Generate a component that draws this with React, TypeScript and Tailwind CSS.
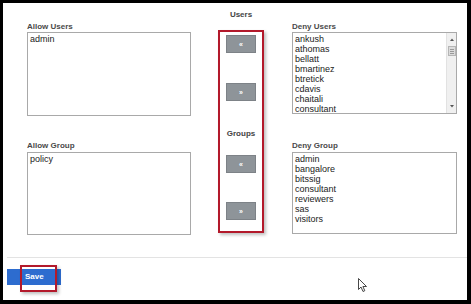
import React from "react";

const font = { fontFamily: '"Liberation Sans", Arial, sans-serif' };

function ArrowBtn({ dir }: { dir: "l" | "r" }) {
  return (
    <div className="w-[30px] h-[18px] bg-[#8e9499] border border-[#7d8287] flex items-center justify-center text-white text-[7px] leading-none font-bold">
      {dir === "l" ? "«" : "»"}
    </div>
  );
}

function ListBox({ items, h, scroll }: { items: string[]; h: string; scroll?: boolean }) {
  return (
    <div className={`relative w-[165px] ${h} border border-[#a9a9a9] bg-white flex`}>
      <div className="flex-1 pl-[2px] pt-[1px] text-[9px] leading-[10px] text-[#222]">
        {items.map((t) => (
          <div key={t}>{t}</div>
        ))}
      </div>
      {scroll && (
        <div className="w-[10px] h-full bg-[#f0f0f0] border-l border-[#e2e2e2] flex flex-col items-center">
          <svg width="10" height="10" viewBox="0 0 10 10" className="mt-[2px]">
            <path d="M3 6 L5 3.5 L7 6 Z" fill="#555" />
          </svg>
          <div className="w-[8px] h-[10px] mt-[1px] bg-[#dcdcdc] border border-[#b5b5b5] flex flex-col items-center justify-center gap-[1px]">
            <div className="w-[4px] h-px bg-[#999]" />
            <div className="w-[4px] h-px bg-[#999]" />
            <div className="w-[4px] h-px bg-[#999]" />
          </div>
          <div className="flex-1" />
          <svg width="10" height="10" viewBox="0 0 10 10" className="mb-[2px]">
            <path d="M3 4 L5 6.5 L7 4 Z" fill="#555" />
          </svg>
        </div>
      )}
    </div>
  );
}

export default function App() {
  return (
    <div className="w-[471px] h-[304px] bg-black pt-[3px] pl-[3px] pr-[4px] pb-[4px]" style={font}>
      <div className="relative w-full h-full bg-white overflow-hidden">
        <div className="flex items-start pl-[24px] pt-[7px]">
          {/* left column */}
          <div className="mt-[12px] w-[164px] flex flex-col">
            <div className="text-[8px] leading-[10px] font-bold text-[#4a4a4a]">Allow Users</div>
            <div className="w-[164px] h-[84px] border border-[#a9a9a9] pl-[2px] pt-[1px] text-[9px] leading-[10px] text-[#222]">
              admin
            </div>
            <div className="mt-[25px] text-[8px] leading-[10px] font-bold text-[#4a4a4a]">Allow Group</div>
            <div className="mt-[1px] w-[164px] h-[83px] border border-[#a9a9a9] pl-[2px] pt-[1px] text-[9px] leading-[10px] text-[#222]">
              policy
            </div>
          </div>

          {/* middle column */}
          <div className="ml-[27px] w-[46px] flex flex-col items-center">
            <div className="text-[8px] leading-[10px] font-bold text-[#444]">Users</div>
            <div className="mt-[10px] w-[46px] h-[203px] border-2 border-[#b3192b] shadow-[2px_2px_3px_rgba(0,0,0,0.25)] flex flex-col items-center pt-[3px]">
              <ArrowBtn dir="l" />
              <div className="mt-[30px]">
                <ArrowBtn dir="r" />
              </div>
              <div className="mt-[28px] text-[8px] leading-[10px] font-bold text-[#444]">Groups</div>
              <div className="mt-[16px]">
                <ArrowBtn dir="l" />
              </div>
              <div className="mt-[29px]">
                <ArrowBtn dir="r" />
              </div>
            </div>
          </div>

          {/* right column */}
          <div className="ml-[28px] mt-[12px] w-[165px] flex flex-col">
            <div className="text-[8px] leading-[10px] font-bold text-[#4a4a4a]">Deny Users</div>
            <ListBox
              h="h-[82px]"
              scroll
              items={["ankush", "athomas", "bellatt", "bmartinez", "btretick", "cdavis", "chaitali", "consultant"]}
            />
            <div className="mt-[27px] text-[8px] leading-[10px] font-bold text-[#4a4a4a]">Deny Group</div>
            <div className="mt-[1px]">
              <ListBox
                h="h-[82px]"
                items={["admin", "bangalore", "bitssig", "consultant", "reviewers", "sas", "visitors"]}
              />
            </div>
          </div>
        </div>

        {/* footer */}
        <div className="mt-[22px] ml-[4px] h-px bg-[#e3e3e3]" />
        <div className="mt-[11px] ml-[4px] w-[54px] h-[16px] bg-[#2d6ccf] flex items-center pl-[18px] text-white text-[8px] font-bold leading-none">
          Save
        </div>

        {/* red highlight around Save */}
        <div className="absolute left-[17px] top-[262px] w-[37px] h-[27px] border-2 border-[#b3192b] shadow-[2px_2px_3px_rgba(0,0,0,0.25)]" />

        {/* mouse cursor */}
        <svg className="absolute left-[355px] top-[275px]" width="10" height="15" viewBox="0 0 10 15">
          <path d="M0.5 0.5 L0.5 11.5 L3 9 L5 13.5 L6.8 12.7 L4.9 8.5 L8.5 8.5 Z" fill="white" stroke="#333" strokeWidth="0.9" strokeLinejoin="round" />
        </svg>
      </div>
    </div>
  );
}
